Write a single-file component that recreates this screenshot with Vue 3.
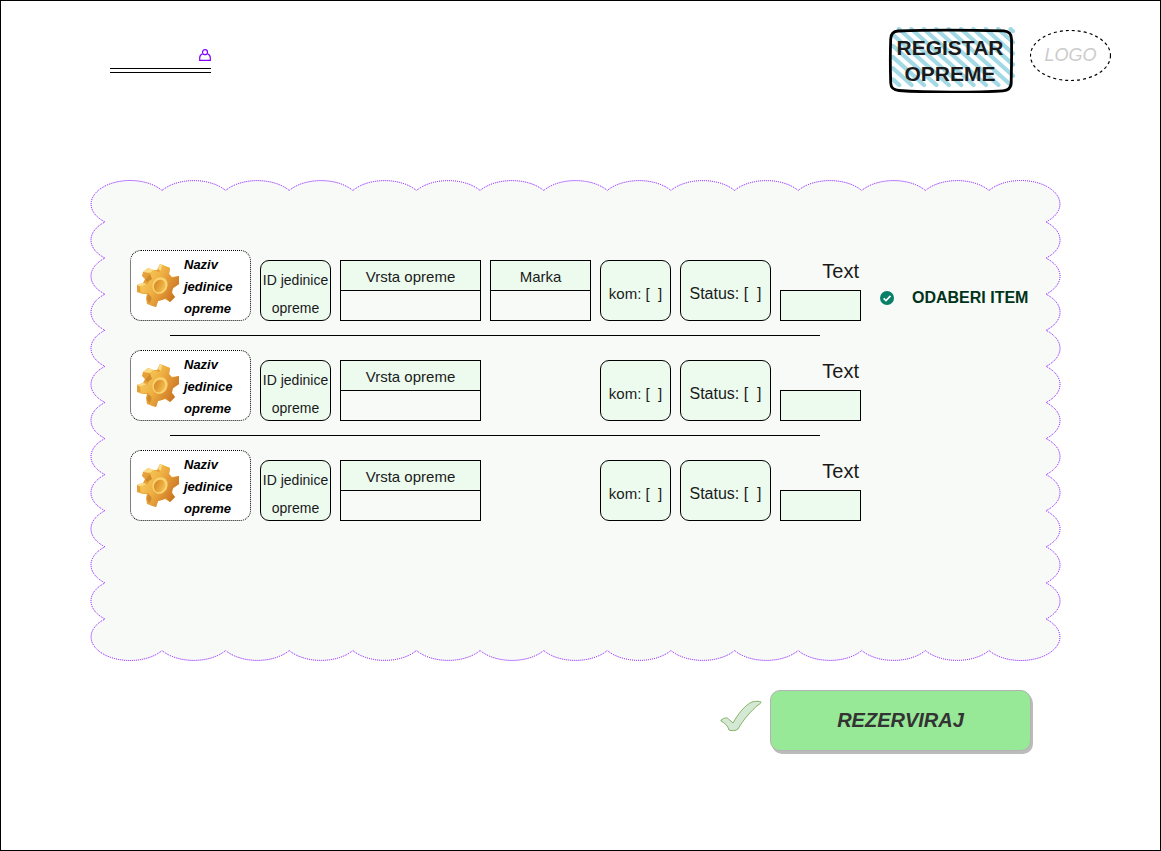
<script setup>
import { ref } from 'vue'

const items = [
  { id: 1, brand: true, pick: true },
  { id: 2, brand: false, pick: false },
  { id: 3, brand: false, pick: false }
]
const notes = ref(['', '', ''])

// Scalloped outline of the panel, in a 971 x 481 box
function cloudPath() {
  const arc = 'A 39 23.5 0 0 1 '
  const left = 72, right = 899, top = 10.5, bottom = 470.5
  const x0 = 15, x1 = 956, y0 = 42, y1 = 439
  const cols = 13, rows = 11
  const dx = (right - left) / cols
  const dy = (y1 - y0) / rows
  let d = `M ${left} ${top} `
  for (let i = 1; i <= cols; i++) d += `${arc}${left + dx * i} ${top} `
  d += `A 39 23.5 0 1 1 ${x1} ${y0} `
  for (let i = 1; i <= rows; i++) d += `${arc}${x1} ${y0 + dy * i} `
  d += `A 39 23.5 0 1 1 ${right} ${bottom} `
  for (let i = 1; i <= cols; i++) d += `${arc}${right - dx * i} ${bottom} `
  d += `A 39 23.5 0 1 1 ${x0} ${y1} `
  for (let i = 1; i <= rows; i++) d += `${arc}${x0} ${y1 - dy * i} `
  return d + `A 39 23.5 0 1 1 ${left} ${top} Z`
}
const cloud = cloudPath()

// Parallel strokes of the badge, kept inside its hatched area
function hatchPath() {
  const x0 = 5, y0 = 2, x1 = 125, y1 = 58, slope = 0.9
  let d = ''
  for (let s = -51; s < 124; s += 12.4) {
    let ax = s, ay = y0
    if (s < x0) { ax = x0; ay = y0 + (x0 - s) * slope }
    let bx = s + (y1 - y0) / slope, by = y1
    if (bx > x1) { bx = x1; by = y0 + (x1 - s) * slope }
    d += `M${ax.toFixed(1)} ${ay.toFixed(1)}L${bx.toFixed(1)} ${by.toFixed(1)}`
  }
  return d
}
const hatch = hatchPath()
</script>

<template>
  <div class="page">
    <header class="top">
      <a href="#" class="user" aria-label="Korisnik">
        <svg class="user-icon" viewBox="0 0 12 12" fill="none" stroke="#8000ff" stroke-width="1.2">
          <circle cx="6" cy="3.2" r="2.5" />
          <path d="M3.6 4.800C1.800 5.600 0.700 7 0.700 8.800V11.300H11.300V8.800C11.300 7 10.200 5.600 8.400 4.800" />
        </svg>
        <span class="lines"></span>
      </a>
      <div class="brand">
        <h1 class="badge">
          <svg class="badge-art" viewBox="0 0 128 66" fill="none">
            <path :d="hatch" stroke="#a2d9e5" stroke-width="4.200" stroke-linecap="round" />
            <path d="M10 4C40 2.800 90 3.200 116 3.800Q123.500 4.500 123.500 12C123.800 28 123.500 42 123.200 56Q122.500 63.500 115 63.800C85 65.800 40 65.500 11 63.500Q3 63 2.700 56C2.200 40 2.200 26 2.700 12Q3 4.500 10 4Z" stroke="#000" stroke-width="2.800" />
          </svg>
          <span class="badge-text">REGISTAR<br />OPREME</span>
        </h1>
        <div class="logo">
          <svg class="logo-ring" viewBox="0 0 81 51" fill="none">
            <ellipse cx="40.500" cy="25.500" rx="40" ry="25" stroke="#000" stroke-width="1.200" stroke-dasharray="3 3" />
          </svg>
          <span class="logo-text">LOGO</span>
        </div>
      </div>
    </header>

    <main class="panel">
      <svg class="cloud" viewBox="0 0 971 481" preserveAspectRatio="none">
        <path :d="cloud" fill="#f8faf7" stroke="#8000ff" stroke-dasharray="1 1" vector-effect="non-scaling-stroke" />
      </svg>
      <div class="list">
        <template v-for="(item, i) in items" :key="item.id">
          <hr v-if="i > 0" class="rule" />
          <div class="row">
            <div class="card">
              <svg class="gear" viewBox="0 0 44 44">
                <defs>
                  <linearGradient :id="'face' + i" x1="0" y1="0" x2="1" y2="0.600">
                    <stop offset="0" stop-color="#fbd568" />
                    <stop offset="0.500" stop-color="#efb143" />
                    <stop offset="1" stop-color="#cb7222" />
                  </linearGradient>
                  <linearGradient :id="'hole' + i" x1="0" y1="0" x2="1" y2="0">
                    <stop offset="0" stop-color="#d88a26" />
                    <stop offset="1" stop-color="#f3bd4e" />
                  </linearGradient>
                </defs>
                <path fill="#e5a137" d="M7 8L12 4 17 6 21 6 24 0 34 4 33 10 36 13 43 12 43 20 36 25 36 29 39 33 34 38 29 35 22 37 20 43 11 40 10 34 11 30 7 30 1 28 1 21 7 19 9 15 6 12Z" />
                <path fill="#fbdc83" d="M7 8L12 4 18 6 14 9ZM1 21L7 19 11 20 5 23ZM22 5L24 0 27 1 25 7Z" />
                <path fill="#d08a2c" d="M14 10L17 16 13 19 9 16ZM12 30L16 33 14 39 11 36Z" />
                <path :fill="'url(#face' + i + ')'" d="M14 9L19 6 22 8 25 7 26 1 34 4 33 10 36 14 43 12 43 20 37 24 36 29 39 33 34 38 30 34 26 36 22 37 20 43 14 41 16 34 12 29 5 30 4 22 11 21 13 17 16 15Z" />
                <ellipse cx="24" cy="21.500" rx="7.500" ry="8.500" fill="#fad370" transform="rotate(25 24 21.500)" />
                <ellipse cx="23.500" cy="22" rx="5.500" ry="6.500" :fill="'url(#hole' + i + ')'" transform="rotate(25 23.500 22)" />
              </svg>
              <span class="card-text">Naziv jedinice opreme</span>
            </div>
            <div class="box box-id">ID jedinice opreme</div>
            <table class="cell">
              <thead><tr><th scope="col">Vrsta opreme</th></tr></thead>
              <tbody><tr><td></td></tr></tbody>
            </table>
            <table v-if="item.brand" class="cell">
              <thead><tr><th scope="col">Marka</th></tr></thead>
              <tbody><tr><td></td></tr></tbody>
            </table>
            <div class="box box-qty">kom: [&nbsp; ]</div>
            <div class="box box-status">Status: [&nbsp; ]</div>
            <div class="field">
              <label :for="'text-' + item.id">Text</label>
              <input :id="'text-' + item.id" v-model="notes[i]" type="text" />
            </div>
            <button v-if="item.pick" type="button" class="pick">
              <svg class="pick-icon" viewBox="0 0 14 14">
                <circle cx="7" cy="7" r="7" fill="#087f66" />
                <path d="M3.600 7.300L6 9.600 10.500 4.900" fill="none" stroke="#fff" stroke-width="1.600" />
              </svg>
              <span>ODABERI ITEM</span>
            </button>
          </div>
        </template>
      </div>
    </main>

    <footer class="actions">
      <svg class="tick" viewBox="0 0 42 32">
        <path d="M1 20C4 18 7 17 8.500 19L13 23C18 14 25 5 32 2C35 1 39 1 41 2C41 3 40 4 38 5C31 11 23 20 18 29C16 31 11 31 9 30C8 26 5 23 1 21Z" fill="#d5e8d4" stroke="#82b366" />
      </svg>
      <button type="button" class="reserve">REZERVIRAJ</button>
    </footer>
  </div>
</template>

<style>
body {
  margin: 0;
}
</style>

<style scoped>
.page {
  box-sizing: border-box;
  min-height: 100vh;
  border: 1px solid #000;
  background: #fff;
  color: #1a1a1a;
  font-family: "Liberation Sans", Arial, sans-serif;
}
.top {
  display: flex;
  justify-content: space-between;
  align-items: flex-start;
  padding: 26px 49px 0 109px;
}
.user {
  display: flex;
  flex-direction: column;
  align-items: flex-end;
  width: 101px;
  margin-top: 22px;
}
.user-icon {
  width: 12px;
  height: 12px;
}
.lines {
  width: 100%;
  height: 3px;
  margin-top: 7px;
  border-top: 1px solid #000;
  border-bottom: 1px solid #000;
}
.brand {
  display: flex;
  gap: 14px;
}
.badge {
  position: relative;
  width: 128px;
  height: 66px;
  margin: 0;
  font-size: 21px;
  line-height: 26px;
  text-align: center;
}
.badge-art {
  position: absolute;
  inset: 0;
}
.badge-text {
  position: relative;
  display: block;
  padding: 8px 4px 0 0;
}
.logo {
  position: relative;
  display: flex;
  align-items: center;
  justify-content: center;
  width: 81px;
  height: 51px;
  margin-top: 3px;
  color: #ccc;
  font-size: 18px;
  font-style: italic;
}
.logo-ring {
  position: absolute;
  inset: 0;
}
.panel {
  position: relative;
  box-sizing: border-box;
  min-height: 481px;
  margin: 87px 99px 0 89px;
  padding: 70px 32px 40px 40px;
}
.cloud {
  position: absolute;
  inset: 0;
  width: 100%;
  height: 100%;
}
.list {
  position: relative;
}
.rule {
  width: 650px;
  height: 1px;
  margin: 14px 0 14px 40px;
  border: 0;
  background: #000;
}
.row {
  display: grid;
  grid-template-columns: 121px 71px 141px 101px 71px 91px 81px 1fr;
  column-gap: 9px;
  align-items: end;
}
.card {
  box-sizing: border-box;
  display: flex;
  align-items: center;
  gap: 4px;
  height: 71px;
  padding: 0 14px 0 5px;
  border: 1px dotted #000;
  border-radius: 11px;
  background: #fff;
  color: #000;
  font-size: 13px;
  font-weight: bold;
  font-style: italic;
  line-height: 22px;
}
.card-text {
  padding-top: 2px;
}
.gear {
  flex: none;
  width: 44px;
  height: 44px;
}
.box {
  box-sizing: border-box;
  height: 61px;
  border: 1px solid #000;
  border-radius: 9px;
  background: #edfbef;
  text-align: center;
}
.box-id {
  padding-top: 5px;
  font-size: 14px;
  line-height: 28px;
}
.box-qty {
  grid-column: 5;
  padding-top: 7px;
  font-size: 15px;
  line-height: 52px;
}
.box-status {
  grid-column: 6;
  padding-top: 7px;
  font-size: 16px;
  line-height: 52px;
}
.cell {
  width: 100%;
  height: 61px;
  border-collapse: collapse;
  table-layout: fixed;
}
.cell th,
.cell td {
  box-sizing: border-box;
  height: 30px;
  padding: 0;
  border: 1px solid #000;
}
.cell th {
  padding-top: 2px;
  background: #edfbef;
  font-size: 15px;
  font-weight: normal;
}
.field {
  grid-column: 7;
  display: flex;
  flex-direction: column;
}
.field label {
  padding-right: 2px;
  font-size: 20px;
  line-height: 38px;
  text-align: right;
}
.field input {
  box-sizing: border-box;
  width: 100%;
  height: 31px;
  margin: 0;
  padding: 0 6px;
  border: 1px solid #000;
  border-radius: 0;
  background: #edfbef;
  font: inherit;
}
.pick {
  display: flex;
  align-items: center;
  gap: 18px;
  height: 46px;
  padding: 0;
  margin-left: 10px;
  border: 0;
  background: none;
  color: #00331a;
  font-family: inherit;
  font-size: 16px;
  font-weight: bold;
  white-space: nowrap;
  cursor: pointer;
}
.pick-icon {
  width: 14px;
  height: 14px;
}
.actions {
  display: flex;
  justify-content: flex-end;
  align-items: flex-start;
  gap: 8px;
  padding: 29px 129px 40px 40px;
}
.tick {
  width: 42px;
  height: 32px;
  margin-top: 10px;
}
.reserve {
  box-sizing: border-box;
  width: 261px;
  height: 61px;
  padding: 0;
  border: 1px solid #b3b3b3;
  border-radius: 10px;
  background: #97e897;
  box-shadow: 2px 3px 0 #bbb;
  color: #333;
  font-family: inherit;
  font-size: 20px;
  font-weight: bold;
  font-style: italic;
  cursor: pointer;
}
</style>
